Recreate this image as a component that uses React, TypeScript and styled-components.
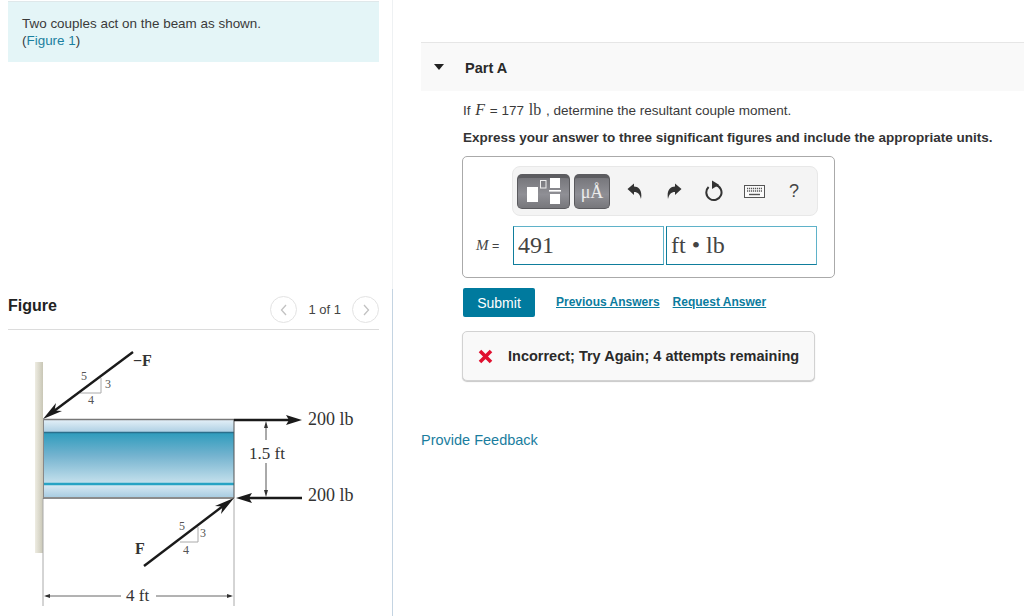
import React from 'react';
import styled, { createGlobalStyle } from 'styled-components';

const Global = createGlobalStyle`
  html, body { margin: 0; padding: 0; background: #fff; }
  body { font-family: "Liberation Sans", Arial, sans-serif; color: #333; overflow: hidden; }
`;

const Page = styled.div`
  display: flex;
  width: 1024px;
  height: 616px;
  overflow: hidden;
`;
const LeftColumn = styled.div`
  width: 393px;
  flex: none;
  display: flex;
  flex-direction: column;
`;
const IntroPanel = styled.section`
  height: 289px;
  flex: none;
  box-sizing: border-box;
  padding: 1px 13px 0 8px;
  border-right: 1px solid #eef1f3;
`;
const InfoBox = styled.div`
  height: 61px;
  box-sizing: border-box;
  padding: 13px 14px 0;
  background: #e4f5f7;
  border-top: 1px solid #dfe8ea;
  font-size: 13.45px;
  line-height: 17px;
  color: #3a3a3a;
`;
const InfoLink = styled.a`
  color: #1a7f9f;
`;
const FigurePanel = styled.section`
  flex: 1;
  box-sizing: border-box;
  border-right: 1px solid #c4d4e2;
  padding: 0 13px 0 8px;
`;
const FigureHead = styled.div`
  height: 41px;
  box-sizing: border-box;
  border-bottom: 1px solid #dcdcdc;
  display: flex;
  align-items: flex-start;
  justify-content: space-between;
  padding-top: 7px;
`;
const FigureTitle = styled.h2`
  margin: 1px 0 0;
  font-size: 16px;
  line-height: 18px;
  font-weight: 700;
  color: #222;
`;
const Pager = styled.div`
  display: flex;
  align-items: center;
  gap: 11px;
  font-size: 13px;
  color: #444;
`;
const PagerButton = styled.span`
  width: 25px;
  height: 25px;
  border: 1px solid #e3e3e3;
  border-radius: 50%;
  display: flex;
  align-items: center;
  justify-content: center;
`;
const Drawing = styled.svg`
  display: block;
  width: 385px;
  height: 286px;
  margin-left: -8px;
`;

const RightColumn = styled.main`
  flex: 1;
  padding-top: 42px;
  padding-left: 28px;
`;
const PartHeader = styled.div`
  height: 49px;
  box-sizing: border-box;
  background: #f9f9f9;
  border-top: 1px solid #e6e6e6;
  display: flex;
  align-items: center;
  padding: 0 0 0 13px;
  font-size: 14.5px;
  font-weight: 700;
  color: #2a2a2a;
`;
const Caret = styled.span`
  width: 0;
  height: 0;
  border-left: 5.5px solid transparent;
  border-right: 5.5px solid transparent;
  border-top: 6px solid #222;
  margin-right: 20px;
`;
const PartLabel = styled.span`
  margin: 1px 0 0 1px;
`;
const PartBody = styled.div`
  padding-left: 41px;
`;
const Prompt = styled.p`
  margin: 10px 0 0 1px;
  font-size: 13.5px;
  line-height: 19px;
  height: 19px;
  color: #3a3a3a;
`;
const MathSerif = styled.span<{ $italic?: boolean }>`
  font-family: "Liberation Serif", serif;
  font-size: 16px;
  line-height: 1;
  margin: 0 1px;
  font-style: ${(p) => (p.$italic ? 'italic' : 'normal')};
`;
const Instruction = styled.p`
  margin: 8px 0 0 1px;
  font-size: 13.5px;
  line-height: 19px;
  font-weight: 700;
  color: #333;
`;
const AnswerBox = styled.div`
  width: 373px;
  height: 122px;
  box-sizing: border-box;
  margin-top: 9px;
  border: 1px solid #aaa;
  border-radius: 5px;
  padding: 9px 0 0 49px;
`;
const Toolbar = styled.div`
  width: 306px;
  height: 50px;
  box-sizing: border-box;
  background: #f4f4f4;
  border: 1px solid #e8e8e8;
  border-radius: 8px;
  display: flex;
  align-items: center;
  padding-left: 4px;
`;
const TemplateButton = styled.div<{ $w: number }>`
  width: ${(p) => p.$w}px;
  height: 35px;
  box-sizing: border-box;
  margin-right: 4px;
  border-radius: 5px;
  border: 1px solid #5a5a5e;
  border-top: 4px solid #5c5c60;
  background: linear-gradient(#77777c, #8f8f95 55%, #77777b);
  display: flex;
  align-items: center;
  justify-content: center;
  font-family: "Liberation Serif", serif;
  font-size: 18px;
  color: #ececec;
`;
const ToolIcons = styled.div`
  display: flex;
`;
const ToolIcon = styled.div`
  width: 40px;
  height: 35px;
  display: flex;
  align-items: center;
  justify-content: center;
  font-size: 18px;
  color: #444;
`;
const InputRow = styled.div`
  display: flex;
  align-items: center;
  margin: 10px 0 0 -36px;
`;
const VarLabel = styled.span`
  width: 37px;
  flex: none;
  font-size: 12.5px;
  white-space: nowrap;
  color: #444;
`;
const MathVar = styled.i`
  font-family: "Liberation Serif", serif;
  font-size: 15px;
`;
const Field = styled.div`
  width: 151px;
  height: 39px;
  box-sizing: border-box;
  margin-right: 2px;
  border: 1px solid #5fb2c9;
  border-bottom-color: #0f7d9c;
  border-left-color: #0f7d9c;
  font-family: "Liberation Serif", serif;
  font-size: 24px;
  line-height: 36px;
  padding-left: 4px;
  color: #444;
`;
const Actions = styled.div`
  display: flex;
  align-items: center;
  margin: 10px 0 0 1px;
`;
const Submit = styled.button`
  width: 72px;
  height: 29px;
  border: 0;
  border-radius: 2px;
  background: #007a9e;
  color: #fff;
  font: 14px "Liberation Sans", Arial, sans-serif;
  padding: 0;
  margin-right: 21px;
`;
const ActionLink = styled.a`
  font-size: 12px;
  font-weight: 700;
  color: #0b7c9e;
  text-decoration: underline;
  margin-right: 13px;
  margin-top: -1px;
`;
const Feedback = styled.div`
  width: 353px;
  height: 50px;
  box-sizing: border-box;
  margin-top: 14px;
  background: #f9f9f9;
  border: 1px solid #d2d2d2;
  border-radius: 5px;
  box-shadow: 0 1px 1px #c8c8c8;
  display: flex;
  align-items: center;
  padding-left: 15px;
  font-size: 14.5px;
  font-weight: 700;
  color: #2a2a2a;
`;
const FeedbackIcon = styled.svg`
  width: 15px;
  height: 15px;
  margin-right: 15px;
  flex: none;
`;
const ProvideFeedback = styled.a`
  display: block;
  margin-top: 50px;
  font-size: 14.5px;
  line-height: 18px;
  color: #1a7d9e;
`;

const serif = { fontFamily: '"Liberation Serif", serif' };

const FigureDrawing = () => (
  <Drawing viewBox="0 330 385 286" aria-label="Beam figure">
    <defs>
      <linearGradient id="web" x1="0" y1="0" x2="0" y2="1">
        <stop offset="0" stopColor="#2f9cbd" />
        <stop offset="0.45" stopColor="#74b3cf" />
        <stop offset="1" stopColor="#c4e0ec" />
      </linearGradient>
      <linearGradient id="flangeTop" x1="0" y1="0" x2="0" y2="1">
        <stop offset="0" stopColor="#e2eff7" />
        <stop offset="1" stopColor="#afd0e4" />
      </linearGradient>
      <linearGradient id="flangeBottom" x1="0" y1="0" x2="0" y2="1">
        <stop offset="0" stopColor="#d8e9f3" />
        <stop offset="1" stopColor="#a9cde2" />
      </linearGradient>
      <linearGradient id="wall" x1="0" y1="0" x2="1" y2="0">
        <stop offset="0" stopColor="#eeece2" />
        <stop offset="1" stopColor="#c9c7b6" />
      </linearGradient>
    </defs>
    <rect x="35" y="362" width="8" height="191" fill="url(#wall)" />
    <line x1="43" y1="498" x2="43" y2="606" stroke="#aaa" />
    <line x1="234" y1="498" x2="234" y2="606" stroke="#aaa" />
    <rect x="43" y="420" width="191" height="12" fill="url(#flangeTop)" />
    <rect x="43" y="433" width="191" height="50" fill="url(#web)" />
    <rect x="43" y="485" width="191" height="12" fill="url(#flangeBottom)" />
    <line x1="43" y1="432.5" x2="234" y2="432.5" stroke="#2b6f8c" strokeWidth="1.5" />
    <line x1="43" y1="484" x2="234" y2="484" stroke="#27a3c4" strokeWidth="2.5" />
    <line x1="43" y1="419.5" x2="234" y2="419.5" stroke="#777" strokeWidth="1.4" />
    <line x1="43" y1="498" x2="234" y2="498" stroke="#666" strokeWidth="1.6" />
    <line x1="43.5" y1="419" x2="43.5" y2="498" stroke="#888" />
    <line x1="234" y1="419" x2="234" y2="498" stroke="#555" />

    <path d="M80 393H101V378" fill="none" stroke="#aaa" />
    <path d="M180 542H198V527" fill="none" stroke="#aaa" />
    <line x1="133" y1="352" x2="54" y2="411" stroke="#1a1a1a" strokeWidth="2.4" />
    <path d="M43 419L56 403L54.5 410.5L62 411Z" fill="#1a1a1a" />
    <line x1="144" y1="566" x2="223" y2="506" stroke="#1a1a1a" strokeWidth="2.4" />
    <path d="M234 498L221 514L222.5 506.5L215 506Z" fill="#1a1a1a" />
    <line x1="234" y1="420" x2="290" y2="420" stroke="#1a1a1a" strokeWidth="2.4" />
    <path d="M302 420L286 415L289 420L286 425Z" fill="#1a1a1a" />
    <line x1="248" y1="498" x2="302" y2="498" stroke="#1a1a1a" strokeWidth="2.4" />
    <path d="M236 498L252 493L249 498L252 503Z" fill="#1a1a1a" />

    <line x1="266" y1="426" x2="266" y2="440" stroke="#555" />
    <path d="M266 421L264 428H268Z" fill="#333" />
    <line x1="266" y1="463" x2="266" y2="492" stroke="#555" />
    <path d="M266 497L264 490H268Z" fill="#333" />

    <line x1="46" y1="596" x2="121" y2="596" stroke="#666" />
    <line x1="156" y1="596" x2="231" y2="596" stroke="#666" />
    <path d="M44 596L50 594V598Z" fill="#333" />
    <path d="M233 596L227 594V598Z" fill="#333" />

    <g style={serif} fill="#333">
      <text x="308" y="425" fontSize="18">200 lb</text>
      <text x="308" y="501" fontSize="18">200 lb</text>
      <text x="249" y="459" fontSize="17">1.5 ft</text>
      <text x="126" y="601" fontSize="17">4 ft</text>
      <text x="133" y="366" fontSize="16" fontWeight="700">−F</text>
      <text x="135" y="554" fontSize="16" fontWeight="700">F</text>
      <g fontSize="12" fill="#555">
        <text x="81" y="380">5</text>
        <text x="105" y="388">3</text>
        <text x="88" y="404">4</text>
        <text x="179" y="530">5</text>
        <text x="200" y="537">3</text>
        <text x="183" y="554">4</text>
      </g>
    </g>
  </Drawing>
);

const Chevron = ({ d }: { d: string }) => (
  <svg width="10" height="12" viewBox="0 0 10 12">
    <path d={d} fill="none" stroke="#c2c2c2" strokeWidth="1.3" />
  </svg>
);

export default function App() {
  return (
    <Page>
      <Global />
      <LeftColumn>
        <IntroPanel>
          <InfoBox>
            Two couples act on the beam as shown.
            <br />
            (<InfoLink>Figure 1</InfoLink>)
          </InfoBox>
        </IntroPanel>
        <FigurePanel>
          <FigureHead>
            <FigureTitle>Figure</FigureTitle>
            <Pager>
              <PagerButton><Chevron d="M7 1L2.5 6L7 11" /></PagerButton>
              <span>1 of 1</span>
              <PagerButton><Chevron d="M3 1L7.5 6L3 11" /></PagerButton>
            </Pager>
          </FigureHead>
          <FigureDrawing />
        </FigurePanel>
      </LeftColumn>
      <RightColumn>
        <PartHeader>
          <Caret />
          <PartLabel>Part A</PartLabel>
        </PartHeader>
        <PartBody>
          <Prompt>
            If <MathSerif $italic>F</MathSerif> = 177 <MathSerif>lb</MathSerif> , determine the resultant couple moment.
          </Prompt>
          <Instruction>Express your answer to three significant figures and include the appropriate units.</Instruction>
          <AnswerBox>
            <Toolbar>
              <TemplateButton $w={53}>
                <svg width="34" height="30" viewBox="0 0 34 30">
                  <rect x="0" y="9" width="11" height="15" fill="#fff" />
                  <rect x="13.5" y="2.5" width="5.5" height="7.5" fill="none" stroke="#eee" />
                  <rect x="23" y="0" width="10" height="10" fill="#fff" />
                  <rect x="22" y="12" width="12" height="1.6" fill="#fff" />
                  <rect x="23" y="16" width="10" height="10" fill="#fff" />
                </svg>
              </TemplateButton>
              <TemplateButton $w={36}>μÅ</TemplateButton>
              <ToolIcons>
                <ToolIcon>
                  <svg width="15" height="17" viewBox="0 0 15 17">
                    <path d="M0.5 6L7 0.5V3.5C12 3.5 15.5 7.5 14 16C13 11.5 11 9 7 9V12Z" fill="#333" />
                  </svg>
                </ToolIcon>
                <ToolIcon>
                  <svg width="15" height="17" viewBox="0 0 15 17">
                    <path d="M14.5 6L8 0.5V3.5C3 3.5 -0.5 7.5 1 16C2 11.5 4 9 8 9V12Z" fill="#333" />
                  </svg>
                </ToolIcon>
                <ToolIcon>
                  <svg width="18" height="22" viewBox="0 0 18 22">
                    <path d="M10.5 5A7.6 7.6 0 1 1 3.6 7" fill="none" stroke="#333" strokeWidth="2" />
                    <path d="M7 0.5L14 4.8L7 9Z" fill="#333" />
                  </svg>
                </ToolIcon>
                <ToolIcon>
                  <svg width="21" height="13" viewBox="0 0 21 13">
                    <rect x="0.5" y="0.5" width="20" height="12" fill="#fafafa" stroke="#555" />
                    <path d="M3 3.5H18M3 6H18" stroke="#555" strokeWidth="1.4" strokeDasharray="1.2 0.8" />
                    <path d="M5 9.5H16" stroke="#555" strokeWidth="1.4" />
                  </svg>
                </ToolIcon>
                <ToolIcon>?</ToolIcon>
              </ToolIcons>
            </Toolbar>
            <InputRow>
              <VarLabel><MathVar>M</MathVar> =</VarLabel>
              <Field>491</Field>
              <Field>ft • lb</Field>
            </InputRow>
          </AnswerBox>
          <Actions>
            <Submit>Submit</Submit>
            <ActionLink>Previous Answers</ActionLink>
            <ActionLink>Request Answer</ActionLink>
          </Actions>
          <Feedback>
            <FeedbackIcon viewBox="0 0 15 15">
              <path d="M2 2L13 13M13 2L2 13" stroke="#e0102f" strokeWidth="3.6" />
            </FeedbackIcon>
            Incorrect; Try Again; 4 attempts remaining
          </Feedback>
        </PartBody>
        <ProvideFeedback>Provide Feedback</ProvideFeedback>
      </RightColumn>
    </Page>
  );
}
